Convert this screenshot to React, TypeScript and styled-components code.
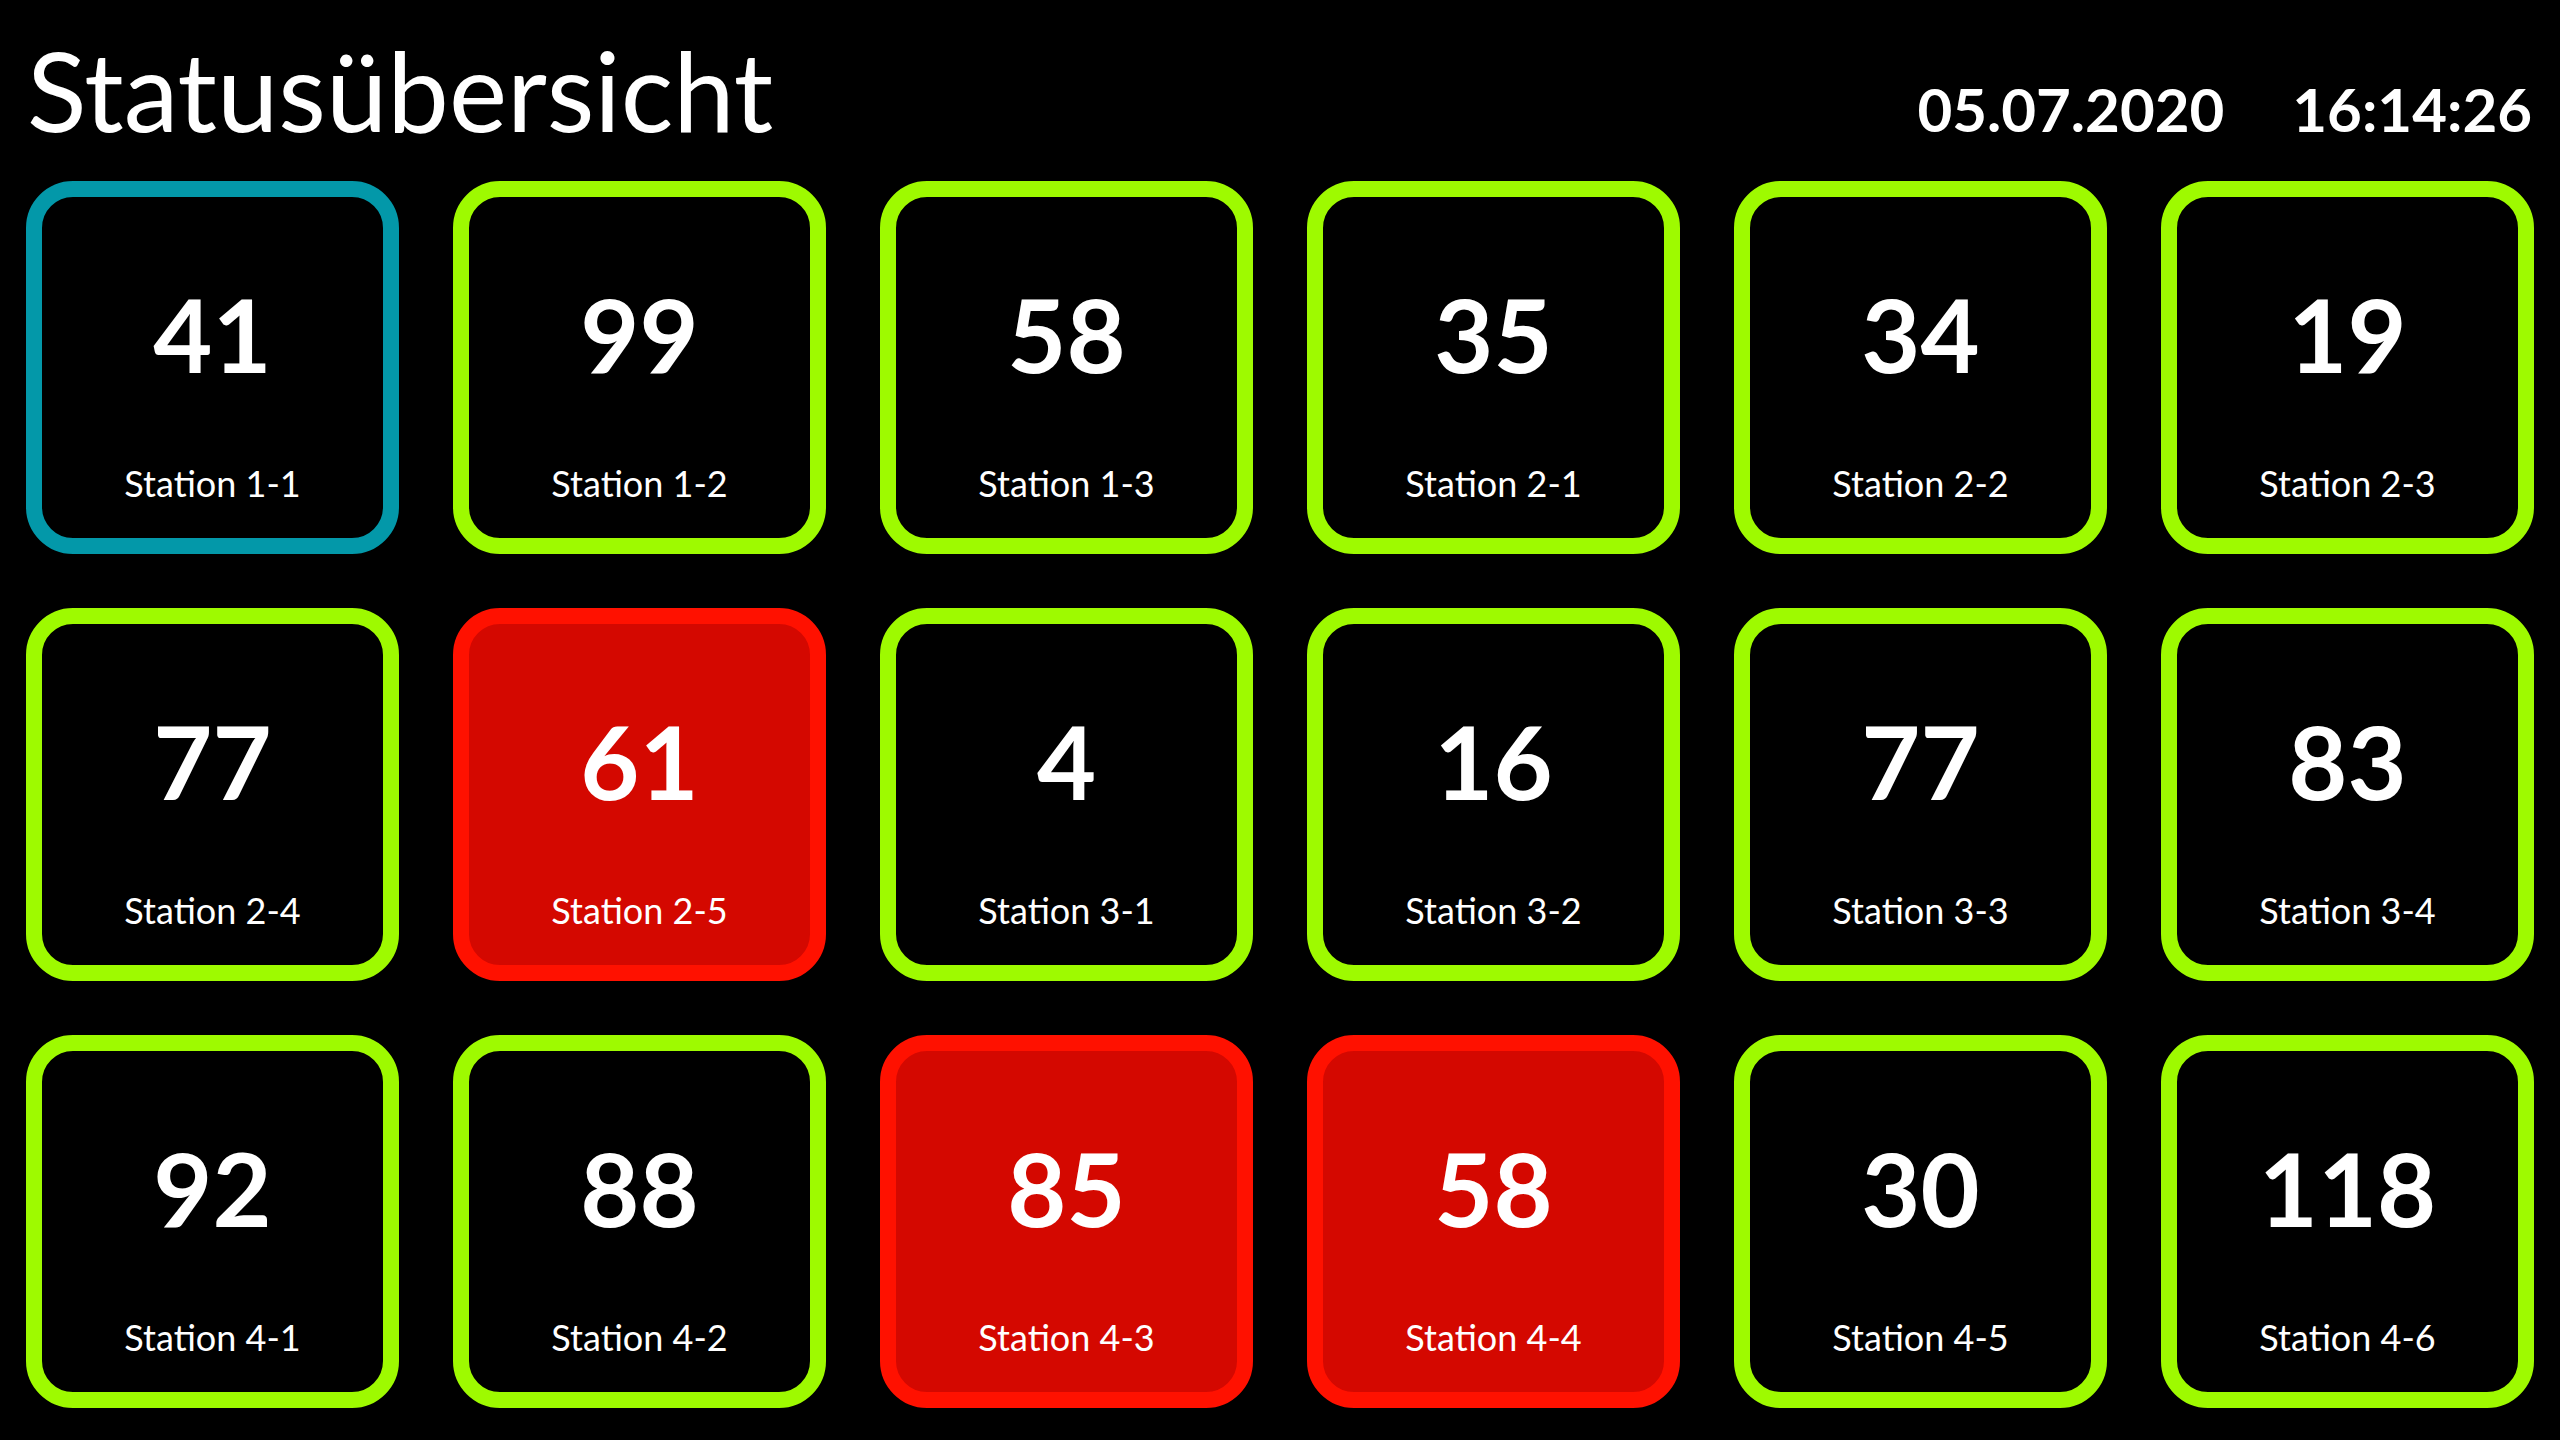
import React from "react";
import styled, { createGlobalStyle } from "styled-components";

const GlobalStyle = createGlobalStyle`
  html, body {
    margin: 0;
    padding: 0;
    background: #000;
  }
  body {
    font-family: Lato, "Open Sans", sans-serif;
    color: #fff;
  }
`;

type Status = "info" | "ok" | "alarm";

const borderColors: Record<Status, string> = {
  info: "#0398a9",
  ok: "#9efa00",
  alarm: "#ff1100",
};

const fillColors: Record<Status, string> = {
  info: "#000",
  ok: "#000",
  alarm: "#d40800",
};

const Page = styled.div`
  width: 2560px;
  height: 1440px;
  box-sizing: border-box;
  padding: 0 26px 32px;
  background: #000;
  display: flex;
  flex-direction: column;
`;

const Header = styled.header`
  height: 181px;
  display: flex;
  justify-content: space-between;
  align-items: flex-start;
`;

const Title = styled.h1`
  margin: 34px 0 0 1px;
  font-family: Lato, sans-serif;
  font-weight: 400;
  font-size: 110px;
  line-height: 1;
  color: #fff;
`;

const Clock = styled.div`
  margin-top: 79px;
  margin-right: 2px;
  display: flex;
  gap: 68px;
  font-family: Lato, sans-serif;
  font-weight: 700;
  font-size: 60px;
  line-height: 1;
  color: #fff;
`;

const Grid = styled.main`
  display: grid;
  grid-template-columns: repeat(6, 1fr);
  grid-auto-rows: 373px;
  gap: 54px;
`;

const Card = styled.div<{ $status: Status }>`
  box-sizing: border-box;
  border: 16px solid ${(p) => borderColors[p.$status]};
  background: ${(p) => fillColors[p.$status]};
  border-radius: 47px;
  display: flex;
  flex-direction: column;
  align-items: center;
  padding-top: 86px;
`;

const Value = styled.div`
  font-family: Lato, sans-serif;
  font-weight: 700;
  font-size: 102px;
  line-height: 1;
  color: #fff;
`;

const Label = styled.div`
  margin-top: 80px;
  font-family: Lato, sans-serif;
  font-weight: 400;
  font-size: 36px;
  line-height: 1;
  color: #fff;
`;

const stations: { name: string; value: number; status: Status }[] = [
  { name: "Station 1-1", value: 41, status: "info" },
  { name: "Station 1-2", value: 99, status: "ok" },
  { name: "Station 1-3", value: 58, status: "ok" },
  { name: "Station 2-1", value: 35, status: "ok" },
  { name: "Station 2-2", value: 34, status: "ok" },
  { name: "Station 2-3", value: 19, status: "ok" },
  { name: "Station 2-4", value: 77, status: "ok" },
  { name: "Station 2-5", value: 61, status: "alarm" },
  { name: "Station 3-1", value: 4, status: "ok" },
  { name: "Station 3-2", value: 16, status: "ok" },
  { name: "Station 3-3", value: 77, status: "ok" },
  { name: "Station 3-4", value: 83, status: "ok" },
  { name: "Station 4-1", value: 92, status: "ok" },
  { name: "Station 4-2", value: 88, status: "ok" },
  { name: "Station 4-3", value: 85, status: "alarm" },
  { name: "Station 4-4", value: 58, status: "alarm" },
  { name: "Station 4-5", value: 30, status: "ok" },
  { name: "Station 4-6", value: 118, status: "ok" },
];

export default function App() {
  return (
    <>
      <GlobalStyle />
      <Page>
        <Header>
          <Title>Statusübersicht</Title>
          <Clock>
            <span>05.07.2020</span>
            <span>16:14:26</span>
          </Clock>
        </Header>
        <Grid>
          {stations.map((s) => (
            <Card key={s.name} $status={s.status}>
              <Value>{s.value}</Value>
              <Label>{s.name}</Label>
            </Card>
          ))}
        </Grid>
      </Page>
    </>
  );
}
